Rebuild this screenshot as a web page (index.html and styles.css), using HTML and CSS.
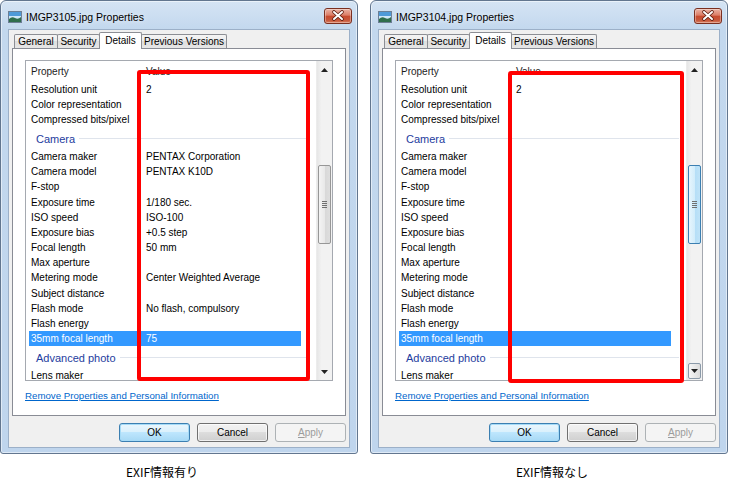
FILE: index.html
```html
<!DOCTYPE html>
<html>
<head>
<meta charset="utf-8">
<link rel="stylesheet" href="styles.css">
</head>
<body>
<div class="page">
  <div class="col">
    <div class="window">
      <div class="titlebar">
        <svg class="ticon" width="14" height="12" viewBox="0 0 14 12"><rect x="0.5" y="0.5" width="13" height="11" fill="#cfe6f7" stroke="#6c7f95"/><rect x="1" y="1" width="12" height="4" fill="#4f9ad8"/><path d="M1 8 Q4 5 7 7 T13 6 V11 H1Z" fill="#2f6e4c"/></svg>
        <span class="title">IMGP3105.jpg Properties</span>
        <div class="close"><svg width="28" height="16" viewBox="0 0 28 16"><path d="M10 4 L18 11 M18 4 L10 11" stroke="#5a1a0e" stroke-width="3.6" stroke-linecap="round"/><path d="M10 4 L18 11 M18 4 L10 11" stroke="#fff" stroke-width="2" stroke-linecap="round"/></svg></div>
      </div>
      <div class="client">
        <div class="tabs">
          <div class="tab t-general">General</div>
          <div class="tab t-security">Security</div>
          <div class="tab t-details sel">Details</div>
          <div class="tab t-prev">Previous Versions</div>
        </div>
        <div class="panel">
          <div class="list">
            <div class="list-main">
              <div class="hdr"><span class="c1">Property</span><span class="c2">Value</span></div>
              <div class="row"><span class="c1">Resolution unit</span><span class="c2">2</span></div>
              <div class="row"><span class="c1">Color representation</span><span class="c2"></span></div>
              <div class="row"><span class="c1">Compressed bits/pixel</span><span class="c2"></span></div>
              <div class="group"><span class="gname">Camera</span><span class="gline"></span></div>
              <div class="row"><span class="c1">Camera maker</span><span class="c2">PENTAX Corporation</span></div>
              <div class="row"><span class="c1">Camera model</span><span class="c2">PENTAX K10D</span></div>
              <div class="row"><span class="c1">F-stop</span><span class="c2"></span></div>
              <div class="row"><span class="c1">Exposure time</span><span class="c2">1/180 sec.</span></div>
              <div class="row"><span class="c1">ISO speed</span><span class="c2">ISO-100</span></div>
              <div class="row"><span class="c1">Exposure bias</span><span class="c2">+0.5 step</span></div>
              <div class="row"><span class="c1">Focal length</span><span class="c2">50 mm</span></div>
              <div class="row"><span class="c1">Max aperture</span><span class="c2"></span></div>
              <div class="row"><span class="c1">Metering mode</span><span class="c2">Center Weighted Average</span></div>
              <div class="row"><span class="c1">Subject distance</span><span class="c2"></span></div>
              <div class="row"><span class="c1">Flash mode</span><span class="c2">No flash, compulsory</span></div>
              <div class="row"><span class="c1">Flash energy</span><span class="c2"></span></div>
              <div class="row selrow"><span class="c1">35mm focal length</span><span class="c2">75</span></div>
              <div class="group"><span class="gname">Advanced photo</span><span class="gline"></span></div>
              <div class="row"><span class="c1">Lens maker</span><span class="c2"></span></div>
            </div>
            <div class="vscroll">
              <div class="sbtn"><svg width="7" height="4" viewBox="0 0 7 4"><path d="M0 4 L3.5 0 L7 4Z" fill="#222"/></svg></div>
              <div class="track"><div class="thumb"><span class="grip"></span></div></div>
              <div class="sbtn"><svg width="7" height="4" viewBox="0 0 7 4"><path d="M0 0 L3.5 4 L7 0Z" fill="#222"/></svg></div>
            </div>
          </div>
          <a class="link">Remove Properties and Personal Information</a>
        </div>
        <div class="buttons">
          <div class="btn btn-default">OK</div>
          <div class="btn">Cancel</div>
          <div class="btn btn-disabled"><u>A</u>pply</div>
        </div>
      </div>
      <div class="redbox redbox-a"></div>
    </div>
    <div class="caption caption-a">EXIF情報有り</div>
  </div>

  <div class="col">
    <div class="window">
      <div class="titlebar">
        <svg class="ticon" width="14" height="12" viewBox="0 0 14 12"><rect x="0.5" y="0.5" width="13" height="11" fill="#cfe6f7" stroke="#6c7f95"/><rect x="1" y="1" width="12" height="4" fill="#4f9ad8"/><path d="M1 8 Q4 5 7 7 T13 6 V11 H1Z" fill="#2f6e4c"/></svg>
        <span class="title">IMGP3104.jpg Properties</span>
        <div class="close"><svg width="28" height="16" viewBox="0 0 28 16"><path d="M10 4 L18 11 M18 4 L10 11" stroke="#5a1a0e" stroke-width="3.6" stroke-linecap="round"/><path d="M10 4 L18 11 M18 4 L10 11" stroke="#fff" stroke-width="2" stroke-linecap="round"/></svg></div>
      </div>
      <div class="client">
        <div class="tabs">
          <div class="tab t-general">General</div>
          <div class="tab t-security">Security</div>
          <div class="tab t-details sel">Details</div>
          <div class="tab t-prev">Previous Versions</div>
        </div>
        <div class="panel">
          <div class="list">
            <div class="list-main">
              <div class="hdr"><span class="c1">Property</span><span class="c2">Value</span></div>
              <div class="row"><span class="c1">Resolution unit</span><span class="c2">2</span></div>
              <div class="row"><span class="c1">Color representation</span><span class="c2"></span></div>
              <div class="row"><span class="c1">Compressed bits/pixel</span><span class="c2"></span></div>
              <div class="group"><span class="gname">Camera</span><span class="gline"></span></div>
              <div class="row"><span class="c1">Camera maker</span><span class="c2"></span></div>
              <div class="row"><span class="c1">Camera model</span><span class="c2"></span></div>
              <div class="row"><span class="c1">F-stop</span><span class="c2"></span></div>
              <div class="row"><span class="c1">Exposure time</span><span class="c2"></span></div>
              <div class="row"><span class="c1">ISO speed</span><span class="c2"></span></div>
              <div class="row"><span class="c1">Exposure bias</span><span class="c2"></span></div>
              <div class="row"><span class="c1">Focal length</span><span class="c2"></span></div>
              <div class="row"><span class="c1">Max aperture</span><span class="c2"></span></div>
              <div class="row"><span class="c1">Metering mode</span><span class="c2"></span></div>
              <div class="row"><span class="c1">Subject distance</span><span class="c2"></span></div>
              <div class="row"><span class="c1">Flash mode</span><span class="c2"></span></div>
              <div class="row"><span class="c1">Flash energy</span><span class="c2"></span></div>
              <div class="row selrow"><span class="c1">35mm focal length</span><span class="c2"></span></div>
              <div class="group"><span class="gname">Advanced photo</span><span class="gline"></span></div>
              <div class="row"><span class="c1">Lens maker</span><span class="c2"></span></div>
            </div>
            <div class="vscroll">
              <div class="sbtn"><svg width="7" height="4" viewBox="0 0 7 4"><path d="M0 4 L3.5 0 L7 4Z" fill="#222"/></svg></div>
              <div class="track"><div class="thumb thumb-hot"><span class="grip"></span></div></div>
              <div class="sbtn sbtn-hot"><svg width="7" height="4" viewBox="0 0 7 4"><path d="M0 0 L3.5 4 L7 0Z" fill="#222"/></svg></div>
            </div>
          </div>
          <a class="link">Remove Properties and Personal Information</a>
        </div>
        <div class="buttons">
          <div class="btn btn-default">OK</div>
          <div class="btn">Cancel</div>
          <div class="btn btn-disabled"><u>A</u>pply</div>
        </div>
      </div>
      <div class="redbox redbox-b"></div>
    </div>
    <div class="caption caption-b">EXIF情報なし</div>
  </div>
</div>
</body>
</html>
```

FILE: styles.css
```css
* { box-sizing: border-box; }

body {
  margin: 0;
  background: #fff;
  font-family: "Liberation Sans", Arial, sans-serif;
  font-size: 10px;
  color: #000;
}

.page {
  display: flex;
  gap: 12px;
  width: 730px;
  height: 479px;
  overflow: hidden;
}

.col {
  width: 358px;
  display: flex;
  flex-direction: column;
}

.window {
  position: relative;
  width: 358px;
  height: 455px;
  border: 1px solid #62768f;
  border-radius: 6px 6px 3px 3px;
  background: linear-gradient(180deg, #d5e4f4 0px, #c3d8ee 28px, #bfd5ed 100%);
  box-shadow: inset 0 0 0 1px rgba(255, 255, 255, 0.5);
  padding: 0 7px 5px;
  display: flex;
  flex-direction: column;
}

.titlebar {
  height: 28px;
  margin: 0 -7px;
  padding: 3px 5px 0 7px;
  display: flex;
  align-items: center;
}

.ticon { flex: none; }

.title {
  margin-left: 4px;
  font-size: 10.5px;
  color: #000;
  flex: 1;
  text-shadow: 0 0 6px rgba(255, 255, 255, 0.9);
}

.close {
  align-self: flex-start;
  margin-top: 4px;
  width: 28px;
  height: 16px;
  border: 1px solid #7a2f20;
  border-radius: 3px;
  background: linear-gradient(180deg, #eab2a4 0%, #dc7d66 45%, #c84a2e 50%, #c6573b 80%, #d97e5f 100%);
  box-shadow: inset 0 0 0 1px rgba(255, 255, 255, 0.35);
  display: flex;
  align-items: center;
  justify-content: center;
}
.close svg { display: block; margin: -1px; }

.client {
  flex: 1;
  background: #f0f0f0;
  border: 1px solid #9cb0c8;
  padding: 2px 3px 0 3px;
  display: flex;
  flex-direction: column;
}

.tabs {
  display: flex;
  align-items: flex-start;
  height: 16px;
  padding-left: 2px;
  position: relative;
  z-index: 2;
}

.tab {
  height: 14px;
  margin-top: 2px;
  margin-left: -1px;
  border: 1px solid #8c8e94;
  border-bottom: none;
  border-radius: 2px 2px 0 0;
  background: linear-gradient(180deg, #f4f4f4 0%, #ececec 50%, #dedede 50%, #e6e6e6 100%);
  line-height: 13px;
  text-align: center;
  white-space: nowrap;
}
.t-general { margin-left: 0; width: 44px; }
.t-security { width: 43px; }
.t-details { width: 43px; }
.t-prev { width: 86px; }

.tab.sel {
  height: 17px;
  margin-top: 0;
  background: #fff;
  line-height: 15px;
  position: relative;
  z-index: 3;
}

.panel {
  width: 334px;
  height: 368px;
  border: 1px solid #898c95;
  background: #fff;
  padding: 11px 0 0 12px;
  position: relative;
  z-index: 1;
}

.list {
  width: 308px;
  height: 321px;
  border: 1px solid #a5a9b0;
  display: flex;
  overflow: hidden;
}

.list-main {
  width: 290px;
  overflow: hidden;
}

.hdr {
  height: 21px;
  display: flex;
  align-items: center;
  margin-left: 3px;
  padding-left: 2px;
  padding-bottom: 1px;
  color: #1d1d1d;
}

.row {
  height: 15.2px;
  line-height: 15.2px;
  display: flex;
  margin-left: 3px;
  width: 272px;
  padding-left: 2px;
  white-space: nowrap;
}

.c1 { width: 115px; flex: none; }
.c2 { flex: 1; }

.selrow {
  background: #3399ff;
  color: #fff;
}

.group {
  height: 21.4px;
  display: flex;
  align-items: center;
  padding-left: 10px;
  padding-top: 1px;
}
.gname {
  font-size: 11px;
  color: #1e3c9e;
  white-space: nowrap;
}
.gline {
  flex: 1;
  height: 1px;
  background: #dfe4ec;
  margin: 0 7px 0 4px;
}

.vscroll {
  width: 16px;
  display: flex;
  flex-direction: column;
  background: linear-gradient(90deg, #e6e6e6 0%, #f2f2f2 30%, #f2f2f2 100%);
  border-left: 1px solid #ececec;
}

.sbtn {
  height: 17px;
  display: flex;
  align-items: center;
  justify-content: center;
  flex: none;
}
.sbtn svg { display: block; }

.sbtn-hot {
  margin: 0 1px 1px;
  border: 1px solid #8b9aa9;
  border-radius: 2px;
  background: linear-gradient(90deg, #f6f6f6, #dcdcdc);
  height: 16px;
}

.track {
  flex: 1;
  padding-top: 87px;
}

.thumb {
  margin: 0 1px;
  height: 79px;
  border: 1px solid #979797;
  border-radius: 2px;
  background: linear-gradient(90deg, #f4f4f4 0%, #e9e9e9 50%, #d8d8d8 51%, #dedede 100%);
  display: flex;
  align-items: center;
  justify-content: center;
}

.thumb-hot {
  border-color: #3c7fb1;
  background: linear-gradient(90deg, #e6f5fd 0%, #d3edfb 50%, #b4def7 51%, #bfe3f8 100%);
}

.grip {
  width: 5px;
  height: 7px;
  background: repeating-linear-gradient(180deg, #6f6f6f 0px, #6f6f6f 1px, transparent 1px, transparent 2px);
}

.link {
  display: block;
  margin-top: 9px;
  line-height: 12px;
  font-size: 9.7px;
  color: #0066cc;
  text-decoration: underline;
  white-space: nowrap;
}

.buttons {
  display: flex;
  justify-content: flex-end;
  gap: 7px;
  margin-top: 7px;
  padding-right: 0px;
}

.btn {
  width: 71px;
  height: 19px;
  border: 1px solid #707070;
  border-radius: 3px;
  background: linear-gradient(180deg, #f2f2f2 0%, #ebebeb 50%, #dddddd 50%, #cfcfcf 100%);
  box-shadow: inset 0 0 0 1px rgba(255, 255, 255, 0.7);
  display: flex;
  align-items: center;
  justify-content: center;
  line-height: 12px;
}

.btn-default {
  border-color: #3c7fb1;
  background: linear-gradient(180deg, #eaf6fd 0%, #d9f0fc 50%, #bee6fd 50%, #a7d9f5 100%);
  box-shadow: inset 0 0 0 1px #a6dbf7;
}

.btn-disabled {
  border-color: #adb2b5;
  background: #f4f4f4;
  color: #9c9c9c;
  box-shadow: none;
}

.redbox {
  position: absolute;
  border: 4px solid #ff0000;
  border-radius: 3px;
  pointer-events: none;
  z-index: 5;
}
.redbox-a { left: 136px; top: 69px; width: 173px; height: 311px; }
.redbox-b { left: 137px; top: 70px; width: 176px; height: 312px; }

.caption {
  margin-top: 11px;
  height: 14px;
  line-height: 14px;
  font-family: "Noto Sans CJK JP", sans-serif;
  font-size: 12px;
  white-space: nowrap;
}
.caption-a { padding-left: 126px; }
.caption-b { padding-left: 146px; }
```
